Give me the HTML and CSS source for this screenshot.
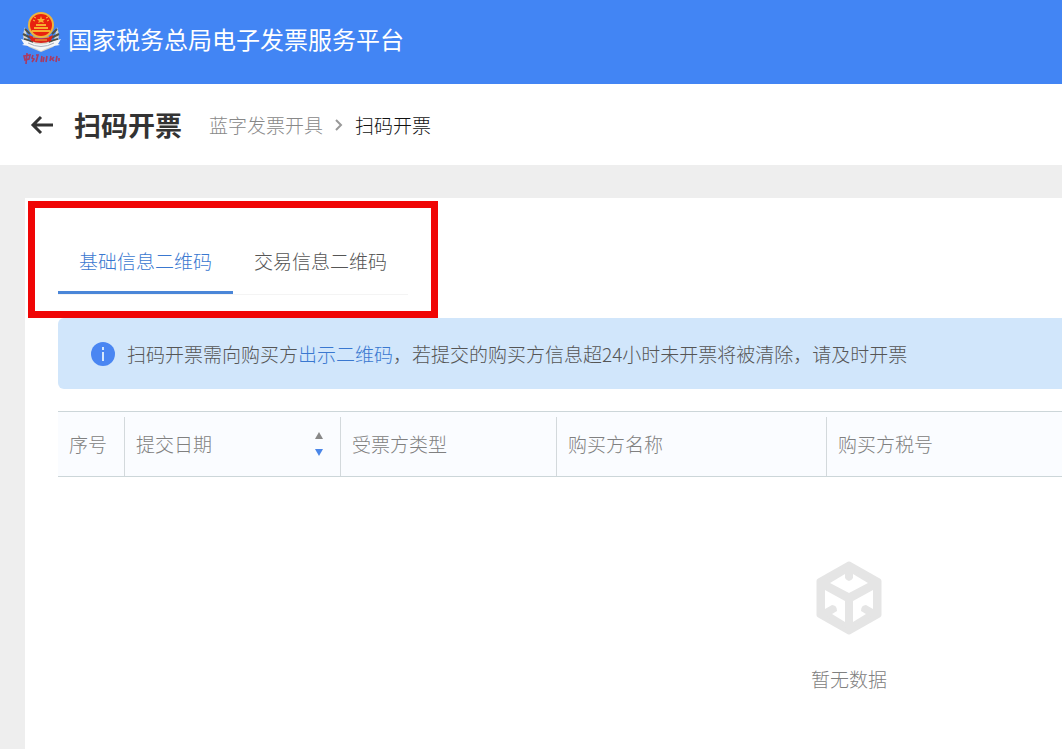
FILE: index.html
```
<!DOCTYPE html>
<html lang="zh-CN">
<head>
  <meta charset="UTF-8">
  <meta name="viewport" content="width=device-width, initial-scale=1.0">
  <title>扫码开票</title>
  <link rel="stylesheet" href="styles.css">
</head>
<body>
  <header class="app-header">
    <svg class="logo" viewBox="0 0 42 54" aria-hidden="true">
      <path d="M5 15Q0 28 9 35L21 40L33 35Q42 28 37 15L34 28H8Z" fill="#d9d6cc"/>
      <path d="M5 17l5 5M3 22l8 4M4 27l9 3M37 17l-5 5M39 22l-8 4M38 27l-9 3" stroke="#4e5148" stroke-width="2"/>
      <circle cx="21" cy="13" r="13" fill="#f0b43c"/>
      <circle cx="21" cy="13" r="11" fill="#e8220f"/>
      <path d="M21 4l1 3h3l-2 2 1 2-3-1-3 1 1-2-2-2h3zM16 12h10v2H16zM14 15h14v2H14zM12 18h18v2H12z" fill="#f8ad2f"/>
      <path d="M13 8l2 1M14 5l2 1M29 8l-2 1M28 5l-2 1" stroke="#f8c53a" stroke-width="1"/>
      <path d="M9 23Q21 30 33 23L31 29Q21 33 11 29Z" fill="#d9231b"/>
      <path d="M13 25h16M15 28h12" stroke="#efb93e" stroke-width="1"/>
      <path d="M1 27l7 2q13 7 26 0l7-2-3 5 2 1q-10 1-19 6Q12 34 2 33l2-1z" fill="#f5f6f8"/>
      <path d="M8 31q13 7 26 0" fill="none" stroke="#a5adbb" stroke-width="1"/>
      <path d="M4 44l6-1-1 4-4 1zM7 41l-1 11M13 43l-1 3 2 1-2 3M16 43h2l-2 7M22 44l-1 6M24 45l-1 5M27 44l-1 6M31 44l-1 5M34 45l-2 2 2 2M37 44l-1 6M39 46v3" fill="none" stroke="#a93a62" stroke-width="1.6"/>
    </svg>
    <span class="app-name">国家税务总局电子发票服务平台</span>
  </header>

  <div class="page-header">
    <button class="back-btn" type="button" aria-label="返回">
      <svg viewBox="0 0 24 20" width="24" height="20"><path d="M23 10H3M11 2L3 10l8 8" fill="none" stroke="currentColor" stroke-width="3"/></svg>
    </button>
    <h1>扫码开票</h1>
    <nav class="breadcrumb">
      <a href="#">蓝字发票开具</a>
      <svg viewBox="0 0 8 12" width="8" height="12" aria-hidden="true"><path d="M1 1l5 5-5 5" fill="none" stroke="#999" stroke-width="2"/></svg>
      <span>扫码开票</span>
    </nav>
  </div>

  <main class="panel">
    <div class="tabs" role="tablist">
      <button class="tab active" type="button" role="tab" aria-selected="true">基础信息二维码</button>
      <button class="tab" type="button" role="tab" aria-selected="false">交易信息二维码</button>
    </div>
    <div class="highlight"></div>

    <div class="notice">
      <svg viewBox="0 0 24 24" width="24" height="24" aria-hidden="true">
        <circle cx="12" cy="12" r="12" fill="#4a86f2"/>
        <path d="M12 5v3M12 10v9" stroke="#d6e8fc" stroke-width="2"/>
      </svg>
      <p>扫码开票需向购买方<a href="#">出示二维码</a>，若提交的购买方信息超24小时未开票将被清除，请及时开票</p>
    </div>

    <table class="data-table">
      <thead>
        <tr>
          <th class="col-index"><div class="cell">序号</div></th>
          <th class="col-type">
            <div class="cell">提交日期
              <button class="sort-btn" type="button" aria-label="按提交日期排序">
                <svg viewBox="0 0 10 26" width="10" height="26"><path d="M5 1l4 7H1z" fill="#888"/><path d="M5 25l4-7H1z" fill="#4a86e8"/></svg>
              </button>
            </div>
          </th>
          <th class="col-type"><div class="cell">受票方类型</div></th>
          <th class="col-name"><div class="cell">购买方名称</div></th>
          <th><div class="cell">购买方税号</div></th>
        </tr>
      </thead>
      <tbody>
        <tr>
          <td colspan="5">
            <div class="empty">
              <svg viewBox="0 0 66 74" width="66" height="74" aria-hidden="true">
                <path d="M33 3L63 20V54L33 71L3 54V20Z" fill="#e5e5e5" stroke="#e5e5e5" stroke-width="5" stroke-linejoin="round"/>
                <path d="M14 22l15-9v4q4 6 8 0v-4l15 9-19 10zM9 29l20 11v21l-13-8 5-3q0-6-5-6l-7 4zM57 29L37 40v21l13-8-5-3q0-6 5-6l7 4z" fill="#fff"/>
              </svg>
              <span>暂无数据</span>
            </div>
          </td>
        </tr>
      </tbody>
    </table>
  </main>
</body>
</html>
```
FILE: styles.css
```
* {
  margin: 0;
  padding: 0;
  box-sizing: border-box;
}

body {
  min-height: 100vh;
  display: flex;
  flex-direction: column;
  font-family: "Noto Sans CJK SC", "Noto Sans", sans-serif;
  font-size: 19px;
  font-weight: 300;
  line-height: 28px;
  color: #555;
  background: #eee;
}

button {
  font: inherit;
  color: inherit;
  background: none;
  border: none;
  cursor: pointer;
}

a {
  text-decoration: none;
}

svg {
  display: block;
  flex: none;
}

/* Top bar */
.app-header {
  display: flex;
  align-items: center;
  gap: 6px;
  height: 84px;
  padding: 0 20px 6px;
  background: #4285f4;
  color: #fff;
}

.logo {
  width: 42px;
  height: 54px;
}

.app-name {
  font-size: 24px;
  font-weight: 400;
}

/* Title and breadcrumb */
.page-header {
  display: flex;
  align-items: center;
  height: 81px;
  padding: 0 30px;
  background: #fff;
}

.back-btn {
  margin-right: 20px;
  color: #333;
}

h1 {
  margin-right: 27px;
  font-size: 27px;
  font-weight: 700;
  color: #333;
}

.breadcrumb {
  display: flex;
  align-items: center;
  gap: 12px;
  color: #111;
}

.breadcrumb a {
  color: #888;
}

/* Content */
.panel {
  position: relative;
  flex: 1;
  margin: 33px 0 0 25px;
  padding: 32px 0 0 33px;
  background: #fff;
  overflow: hidden;
}

.tabs {
  display: flex;
  width: fit-content;
  border-bottom: 1px solid #f4f4f4;
}

.tab {
  height: 64px;
  padding: 0 21px;
  border-bottom: 3px solid transparent;
}

.tab.active {
  color: #3a78d0;
  border-bottom-color: #4a86d8;
}

.highlight {
  position: absolute;
  top: 3px;
  left: 3px;
  width: 410px;
  height: 117px;
  border: 7px solid #f00505;
  pointer-events: none;
}

.notice {
  display: flex;
  align-items: center;
  gap: 12px;
  min-height: 71px;
  margin: 23px 0 22px;
  padding: 0 33px;
  background: #d1e6fb;
  border-radius: 6px 0 0 6px;
}

.notice a {
  color: #3a78d0;
}

.data-table {
  width: 100%;
  min-width: 1582px;
  table-layout: fixed;
  border-collapse: collapse;
}

.data-table th {
  height: 65px;
  padding: 4px 0 0;
  border-top: 1px solid #ccd6d9;
  border-bottom: 1px solid #ccd6d9;
  background: #fafcff;
  color: #808080;
  font-weight: 300;
  text-align: left;
}

.cell {
  display: flex;
  align-items: center;
  justify-content: space-between;
  height: 59px;
  padding: 0 16px 4px 11px;
  border-right: 1px solid #d3d9dc;
}

th:last-child .cell {
  border-right: none;
}

.col-index {
  width: 67px;
}

.col-type {
  width: 216px;
}

.col-name {
  width: 270px;
}

.empty {
  display: flex;
  flex-direction: column;
  align-items: center;
  gap: 30px;
  padding: 84px 0 20px;
  color: #808080;
}
```
